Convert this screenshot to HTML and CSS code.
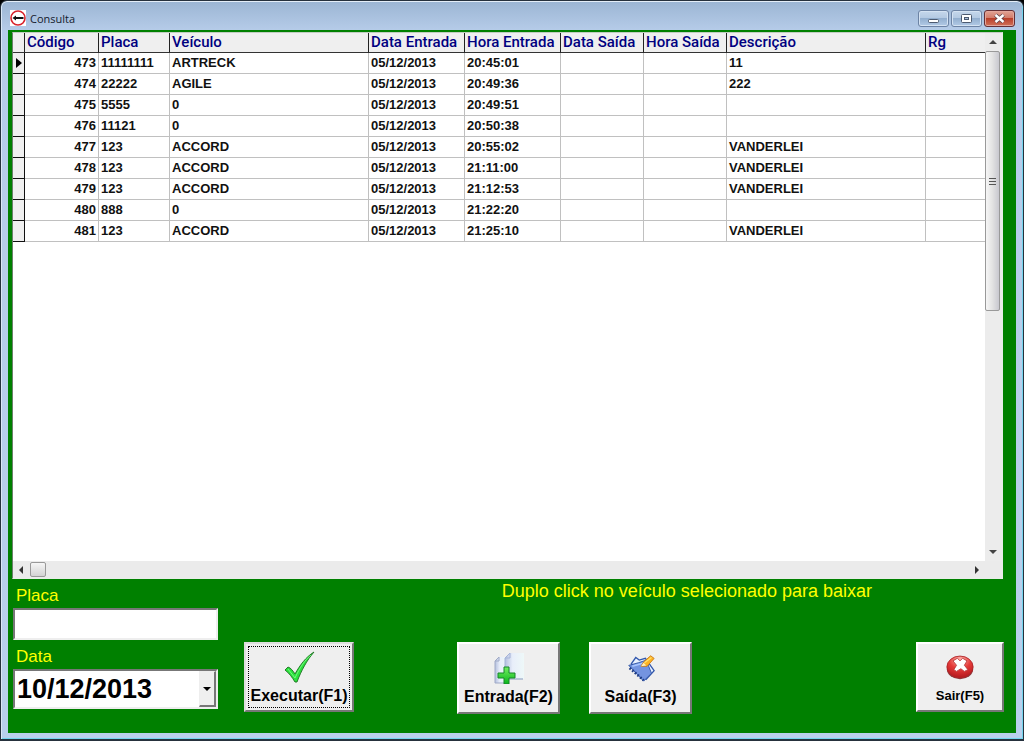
FILE: index.html
```html
<!DOCTYPE html>
<html lang="pt-BR">
<head>
<meta charset="utf-8">
<title>Consulta</title>
<link rel="stylesheet" href="styles.css">
</head>
<body>
<div class="window">
  <header class="titlebar">
    <svg class="app-icon" viewBox="0 0 16 16" aria-hidden="true"><rect width="16" height="16" fill="#fff"/><circle cx="8" cy="8" r="7" fill="#fff" stroke="#d8222c" stroke-width="1.6"/><path d="M2.500 8 6 5.600V7h7.500v2H6v1.400z" fill="#111"/></svg>
    <h1 class="title">Consulta</h1>
    <div class="controls">
      <button class="control" type="button" aria-label="Minimizar"><svg viewBox="0 0 29 15"><rect x="9.500" y="8.500" width="10" height="3" rx="1" fill="#fff" stroke="#4c5a70"/></svg></button>
      <button class="control" type="button" aria-label="Maximizar"><svg viewBox="0 0 29 15"><rect x="9.500" y="3.500" width="10" height="8" rx="1" fill="#fff" stroke="#4c5a70"/><rect x="12.500" y="6.500" width="4" height="2" fill="#a9bfdb" stroke="#4c5a70"/></svg></button>
      <button class="control close" type="button" aria-label="Fechar"><svg viewBox="0 0 29 15"><path d="m10.500 4 8 7m0-7-8 7" stroke="#59414a" stroke-width="4"/><path d="m10.500 4 8 7m0-7-8 7" stroke="#fff" stroke-width="2.400"/></svg></button>
    </div>
  </header>
  <main class="client">
    <section class="grid-panel">
      <div class="viewport">
        <table class="records">
          <colgroup><col class="c-mark"><col class="c-code"><col class="c-plate"><col class="c-wide"><col class="c-in"><col class="c-in"><col class="c-out"><col class="c-out"><col class="c-wide"><col></colgroup>
          <thead><tr><th></th><th>Código</th><th>Placa</th><th>Veículo</th><th>Data Entrada</th><th>Hora Entrada</th><th>Data Saída</th><th>Hora Saída</th><th>Descrição</th><th>Rg</th></tr></thead>
          <tbody>
            <tr><td class="mark"><svg viewBox="0 0 10 12" aria-hidden="true"><path d="M3 1v10l6-5z" fill="#000"/></svg></td><td class="code">473</td><td>11111111</td><td>ARTRECK</td><td>05/12/2013</td><td>20:45:01</td><td></td><td></td><td>11</td><td></td></tr>
            <tr><td class="mark"></td><td class="code">474</td><td>22222</td><td>AGILE</td><td>05/12/2013</td><td>20:49:36</td><td></td><td></td><td>222</td><td></td></tr>
            <tr><td class="mark"></td><td class="code">475</td><td>5555</td><td>0</td><td>05/12/2013</td><td>20:49:51</td><td></td><td></td><td></td><td></td></tr>
            <tr><td class="mark"></td><td class="code">476</td><td>11121</td><td>0</td><td>05/12/2013</td><td>20:50:38</td><td></td><td></td><td></td><td></td></tr>
            <tr><td class="mark"></td><td class="code">477</td><td>123</td><td>ACCORD</td><td>05/12/2013</td><td>20:55:02</td><td></td><td></td><td>VANDERLEI</td><td></td></tr>
            <tr><td class="mark"></td><td class="code">478</td><td>123</td><td>ACCORD</td><td>05/12/2013</td><td>21:11:00</td><td></td><td></td><td>VANDERLEI</td><td></td></tr>
            <tr><td class="mark"></td><td class="code">479</td><td>123</td><td>ACCORD</td><td>05/12/2013</td><td>21:12:53</td><td></td><td></td><td>VANDERLEI</td><td></td></tr>
            <tr><td class="mark"></td><td class="code">480</td><td>888</td><td>0</td><td>05/12/2013</td><td>21:22:20</td><td></td><td></td><td></td><td></td></tr>
            <tr><td class="mark"></td><td class="code">481</td><td>123</td><td>ACCORD</td><td>05/12/2013</td><td>21:25:10</td><td></td><td></td><td>VANDERLEI</td><td></td></tr>
          </tbody>
        </table>
      </div>
      <div class="vbar">
        <svg class="arrow" viewBox="0 0 16 16"><path d="m4 11 4-4 4 4z" fill="#444"/></svg>
        <div class="vthumb"><svg viewBox="0 0 8 9"><path d="M0 1.500h7M0 4.500h7M0 7.500h7" stroke="#555"/></svg></div>
        <svg class="arrow end" viewBox="0 0 16 16"><path d="m4 5 4 4 4-4z" fill="#444"/></svg>
      </div>
      <div class="hbar">
        <svg class="arrow" viewBox="0 0 16 16"><path d="m10 4-4 4 4 4z" fill="#333"/></svg>
        <div class="hthumb"></div>
        <svg class="arrow end" viewBox="0 0 16 16"><path d="m6 4 4 4-4 4z" fill="#333"/></svg>
      </div>
    </section>
    <form class="footer">
      <div class="fields">
        <label class="label" for="placa">Placa</label>
        <input class="box plate" id="placa" type="text">
        <label class="label" for="data">Data</label>
        <div class="box date">
          <input class="date-input" id="data" type="text" value="10/12/2013">
          <button class="drop" type="button" aria-label="Abrir calendário"><svg viewBox="0 0 8 4"><path d="M0 0h8L4 4z" fill="#000"/></svg></button>
        </div>
      </div>
      <div class="side">
        <p class="hint">Duplo click no veículo selecionado para baixar</p>
        <div class="actions">
          <button class="action run" type="submit">
            <svg viewBox="0 0 32 32"><path d="m2 19 3-3c3 1 5 4 7 7C17 14 23 6 31 1 24 9 18 20 14 31h-2C9 26 6 22 2 19z" fill="#28e13b" stroke="#267a2a"/><path d="m5 18 7 9C17 16 22 9 28 4" fill="none" stroke="#75f680"/></svg>
            <span>Executar(F1)</span>
          </button>
          <button class="action entry" type="button">
            <svg viewBox="0 0 32 32"><defs><linearGradient id="sheet"><stop stop-color="#b4bfde"/><stop offset=".4" stop-color="#e8eefa"/><stop offset="1" stop-color="#eef8f8"/></linearGradient><linearGradient id="plus" x2="0" y2="1"><stop stop-color="#74ef62"/><stop offset="1" stop-color="#08b51a"/></linearGradient></defs><path d="M2 9 6 5h8v26H2z" fill="url(#sheet)"/><path d="M2 31V9l4-4v4H2M2 31h12" fill="none" stroke="#9fa9c6"/><path d="m12 6 5-5h14v26H12z" fill="url(#sheet)"/><path d="M12 27V6l5-5v5h-5" fill="none" stroke="#a5b3d8"/><path d="M12 27h18" stroke="#8799bd"/><path d="M11 15h5v6h6v5h-6v6h-5v-6H5v-5h6z" fill="url(#plus)" stroke="#16872a" stroke-linejoin="round"/></svg>
            <span>Entrada(F2)</span>
          </button>
          <button class="action leave" type="button">
            <svg viewBox="0 0 32 32"><path d="m5 11 5-7 4 3 7-2 10 14-9 10z" fill="#e9f1ff" stroke="#3157ac" stroke-width="1.500"/><path d="m2 13 11-3 9-3 6 15-9 9z" fill="#7494e0" stroke="#2c51a4"/><path d="m6 14 14-4" stroke="#a9c6ff" stroke-width="2"/><path d="m3 16 16 14" stroke="#203e86" stroke-width="3" stroke-dasharray="2 2"/><path d="m16 14 3-5 8-7 4 3-8 9z" fill="#ffb322" stroke="#c87915"/><path d="m20 10 8-6" stroke="#ffe16b" stroke-width="1.500"/><path d="m16 14 3-4 3 3z" fill="#fff0bc"/></svg>
            <span>Saída(F3)</span>
          </button>
          <button class="action exit" type="button">
            <svg viewBox="0 0 32 32"><defs><radialGradient id="red" cx=".5" cy=".15" r=".95"><stop stop-color="#ffb4ad"/><stop offset=".45" stop-color="#e53a38"/><stop offset="1" stop-color="#a80f16"/></radialGradient></defs><ellipse cx="16" cy="18.500" rx="15" ry="11.500" fill="#8b3a3d"/><ellipse cx="16" cy="16" rx="15" ry="12.500" fill="url(#red)" stroke="#ad2528"/><path d="m8 9 5-3 3 3 3-3 5 3-3 5 4 5-4 2-4-3-5 3-3-2 3-5z" fill="#fff" stroke="#b9383a"/></svg>
            <span>Sair(F5)</span>
          </button>
        </div>
      </div>
    </form>
  </main>
</div>
</body>
</html>
```
FILE: styles.css
```css
* { box-sizing: border-box; }
body { margin: 0; background: #000; font-family: "Liberation Sans", Arial, sans-serif; }
button, input { font: inherit; color: inherit; }
svg { display: block; }
.window {
  display: flex; flex-direction: column; min-height: 100vh; padding: 0 7px 6px;
  border: 1px solid #26313d; border-bottom-width: 2px; border-radius: 7px 7px 0 0;
  background: linear-gradient(#9bb5d3, #b6cce9 30px, #b9d0ec);
  box-shadow: inset 0 1px #e4eef8, inset 1px 0 #dbe8f7, inset -1px -1px #74d5ee;
}
.titlebar { display: flex; align-items: center; height: 29px; padding: 5px 1px 0 2px; }
.app-icon { width: 16px; height: 16px; }
.title { flex: 1; margin: 0 0 0 4px; font-family: "Open Sans", "Noto Sans", sans-serif; font-size: 11px; font-weight: normal; color: #15202c; }
.controls { display: flex; gap: 2px; }
.control { width: 31px; height: 17px; padding: 0; border: 1px solid #6c83a4; border-radius: 3px; background: linear-gradient(#c5d7eb, #b3c9e2 48%, #93afcf 50%, #b2cae6); box-shadow: inset 0 0 0 1px #d4e2f2; }
.control svg { width: 100%; height: 100%; }
.close { border-color: #642f35; background: linear-gradient(#e2a394, #d17a69 48%, #b93f2a 50%, #d17259); box-shadow: inset 0 0 0 1px #e3a69b; }
.client { flex: 1; display: flex; flex-direction: column; padding: 2px 12px 0 4px; background: #008000; }
.grid-panel { flex: 1; display: grid; grid-template-columns: 1fr 17px; grid-template-rows: 1fr 17px; margin-right: 1px; border: 1px solid #e8eee8; border-left-color: #6b7f6b; border-top-color: #c3cdc3; background: #ebebeb; }
.viewport { overflow: hidden; background: #fff; }
.records { width: 100%; table-layout: fixed; border-collapse: separate; border-spacing: 0; font-size: 13px; font-weight: bold; color: #111; }
.c-mark { width: 12px; }
.c-code { width: 74px; }
.c-plate { width: 71px; }
.c-wide { width: 199px; }
.c-in { width: 96px; }
.c-out { width: 83px; }
th, td { height: 21px; padding: 0 2px; line-height: 20px; white-space: nowrap; overflow: hidden; }
th { height: 20px; background: #efefef; border-right: 1px solid #222; border-bottom: 1px solid #333; text-align: left; font-family: Roboto, "Liberation Sans", sans-serif; font-size: 15px; line-height: 19px; font-weight: 500; color: #000080; }
td { border-right: 1px solid #c0c0c0; border-bottom: 1px solid #c0c0c0; }
th:last-child, td:last-child { border-right: 0; }
.mark { padding: 0; background: #efefef; border-right-color: #111; border-bottom-color: #111; }
.mark svg { width: 10px; height: 12px; }
.code { text-align: right; }
.vbar { display: flex; flex-direction: column; background: #ececec; }
.hbar { display: flex; align-items: center; }
.arrow { width: 16px; height: 16px; flex: none; }
.vbar .end { margin-top: auto; }
.hbar .end { margin-left: auto; }
.vthumb { display: flex; align-items: center; justify-content: center; width: 15px; height: 260px; margin-top: 2px; border: 1px solid #999; border-radius: 2px; background: linear-gradient(90deg, #f6f6f6, #e3e3e3 48%, #c8c8cf); }
.vthumb svg { width: 8px; height: 9px; }
.hthumb { width: 16px; height: 15px; margin-left: 1px; border: 1px solid #999; border-radius: 2px; background: linear-gradient(#f6f6f6, #d3d3d3); }
.footer { display: flex; gap: 26px; min-height: 154px; padding: 7px 0 0 1px; }
.fields { display: flex; flex-direction: column; width: 205px; }
.label { height: 22px; padding-left: 3px; line-height: 20px; font-size: 17px; color: #ff0; }
.box { width: 100%; border: 2px solid; border-color: #777 #eee #eee #777; background: #fff; }
.plate { height: 32px; margin-bottom: 7px; padding: 0 4px; font-size: 20px; }
.date { display: flex; height: 40px; }
.date-input { flex: 1; min-width: 0; padding: 0 2px; border: 0; background: none; font-size: 27px; font-weight: bold; color: #000; }
.drop { width: 17px; padding: 0 3px; border: 1px solid #eee; border-right: 2px solid #777; border-bottom: 2px solid #777; background: #efefef; }
.side { flex: 1; display: flex; flex-direction: column; }
.hint { height: 20px; margin: 0; padding-right: 132px; text-align: right; font-size: 18px; line-height: 10px; color: #ff0; }
.actions { display: flex; align-items: flex-start; margin-top: 36px; }
.action { display: flex; flex-direction: column; align-items: center; justify-content: center; gap: 3px; width: 103px; height: 72px; padding: 3px 0 0; border: 2px solid; border-color: #fff #777 #777 #fff; background: #efefef; font-size: 16px; font-weight: bold; line-height: 20px; color: #000; }
.action svg { width: 32px; height: 32px; }
.run { width: 110px; height: 70px; border-color: #ddd #777 #777 #ddd; outline: 1px dotted #000; outline-offset: -5px; }
.entry { margin-left: 103px; }
.leave { margin-left: 29px; }
.leave svg, .exit svg { width: 28px; height: 28px; margin: 2px 0; }
.exit { width: 88px; height: 70px; margin-left: auto; font-size: 13px; }
```
